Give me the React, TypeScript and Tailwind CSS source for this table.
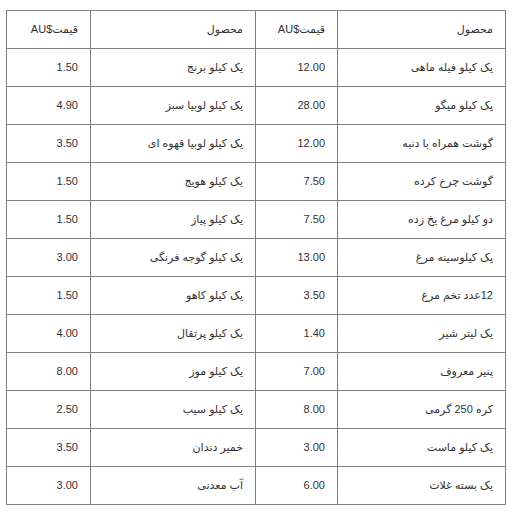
const rows: [string, string, string, string][] = [
  ["یک کیلو فیله ماهی", "12.00", "یک کیلو برنج", "1.50"],
  ["یک کیلو میگو", "28.00", "یک کیلو لوبیا سبز", "4.90"],
  ["گوشت همراه با دنبه", "12.00", "یک کیلو لوبیا قهوه ای", "3.50"],
  ["گوشت چرخ کرده", "7.50", "یک کیلو هویج", "1.50"],
  ["دو کیلو مرغ یخ زده", "7.50", "یک کیلو پیاز", "1.50"],
  ["یک کیلوسینه مرغ", "13.00", "یک کیلو گوجه فرنگی", "3.00"],
  ["12عدد تخم مرغ", "3.50", "یک کیلو کاهو", "1.50"],
  ["یک لیتر شیر", "1.40", "یک کیلو پرتقال", "4.00"],
  ["پنیر معروف", "7.00", "یک کیلو موز", "8.00"],
  ["کره 250 گرمی", "8.00", "یک کیلو سیب", "2.50"],
  ["یک کیلو ماست", "3.00", "خمیر دندان", "3.50"],
  ["یک بسته غلات", "6.00", "آب معدنی", "3.00"],
]

const cell = "h-[38px] border border-[#808080] px-3 text-right align-middle"

export default function App() {
  return (
    <div
      className="min-h-screen bg-white pt-[10px] pl-[6px] text-[11px] text-[#333]"
      style={{ fontFamily: '"Liberation Sans", "DejaVu Sans", sans-serif' }}
    >
      <table dir="rtl" className="w-[499px] table-fixed border-collapse">
        <colgroup>
          <col className="w-[168px]" />
          <col className="w-[82px]" />
          <col className="w-[165px]" />
          <col className="w-[84px]" />
        </colgroup>
        <thead>
          <tr>
            <th className={`${cell} font-normal`}>محصول</th>
            <th className={`${cell} font-normal`}>قیمت$AU</th>
            <th className={`${cell} font-normal`}>محصول</th>
            <th className={`${cell} font-normal`}>قیمت$AU</th>
          </tr>
        </thead>
        <tbody>
          {rows.map((r, i) => (
            <tr key={i}>
              <td className={cell}>{r[0]}</td>
              <td className={cell}>{r[1]}</td>
              <td className={cell}>{r[2]}</td>
              <td className={cell}>{r[3]}</td>
            </tr>
          ))}
        </tbody>
      </table>
    </div>
  )
}
